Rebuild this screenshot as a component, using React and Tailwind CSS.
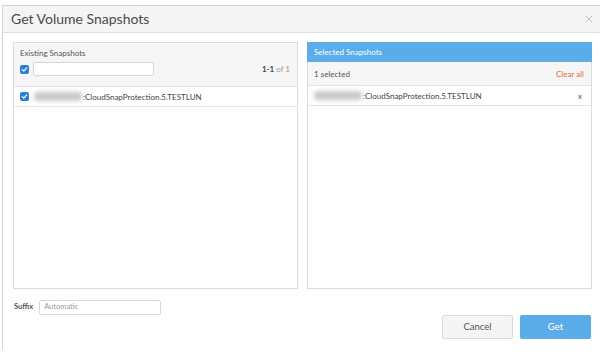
import React from "react";

const Check = () => (
  <span className="w-[9px] h-[9px] rounded-[2px] bg-[#2f7fd6] flex items-center justify-center shrink-0">
    <svg viewBox="0 0 10 10" className="w-[7px] h-[7px]">
      <path d="M1.8 5.2 L4 7.3 L8.2 2.6" stroke="#fff" strokeWidth="1.7" fill="none" strokeLinecap="round" strokeLinejoin="round" />
    </svg>
  </span>
);

const Blur = () => (
  <span className="inline-block w-[48px] h-[9px] bg-[#c9c9c9] blur-[2px] rounded-sm mr-[1px]"></span>
);

const App = () => {
  return (
    <div
      className="w-[600px] h-[354px] bg-white overflow-hidden pt-[5px] pl-[2px]"
      style={{ fontFamily: "Lato, 'Open Sans', sans-serif" }}
    >
      <div className="w-[620px] h-[345px] border-l border-t border-[#d4d4d4] bg-white flex flex-col">
        {/* header */}
        <div className="h-[27px] bg-[#f5f5f5] border-b border-[#dedede] flex items-center justify-between pl-[8px] pr-[29px]">
          <span className="text-[14px] text-[#4a4a4a] leading-none">Get Volume Snapshots</span>
          <svg viewBox="0 0 10 10" className="w-[8px] h-[8px]">
            <path d="M1 1 L9 9 M9 1 L1 9" stroke="#b5b5b5" strokeWidth="1" />
          </svg>
        </div>

        {/* body */}
        <div className="pl-[10px] pt-[9px] flex gap-[9px]">
          {/* existing */}
          <div className="w-[285px] h-[247px] border border-[#dcdcdc] flex flex-col">
            <div className="bg-[#f6f6f6] h-[43px] flex flex-col">
              <div className="h-[19px] flex items-center pl-[6px] text-[8px] text-[#555]">Existing Snapshots</div>
              <div className="flex items-center pl-[6px] pr-[7px] gap-[4px]">
                <Check />
                <div className="w-[121px] h-[14px] bg-white border border-[#d6d6d6] rounded-[2px]"></div>
                <span className="ml-auto text-[8px] text-[#999]">
                  <span className="text-[#444] font-bold">1-1</span> of 1
                </span>
              </div>
            </div>
            <div className="h-[21px] border-t border-b border-[#e4e4e4] flex items-center pl-[6px] gap-[4px] text-[8px] text-[#444]">
              <Check />
              <span className="flex items-center ml-[1px]">
                <Blur />
                :CloudSnapProtection.5.TESTLUN
              </span>
            </div>
          </div>

          {/* selected */}
          <div className="w-[285px] h-[247px] border border-[#dcdcdc] flex flex-col">
            <div className="h-[20px] bg-[#5aade8] flex items-center pl-[7px] text-[8px] text-white -mt-px -mx-px">
              Selected Snapshots
            </div>
            <div className="h-[23px] bg-[#f6f6f6] flex items-center justify-between pl-[6px] pr-[7px] text-[8px]">
              <span className="text-[#555]">1 selected</span>
              <span className="text-[#e4663c]">Clear all</span>
            </div>
            <div className="h-[21px] border-t border-b border-[#e4e4e4] flex items-center justify-between pl-[6px] pr-[9px] text-[8px] text-[#444]">
              <span className="flex items-center">
                <Blur />
                :CloudSnapProtection.5.TESTLUN
              </span>
              <span className="text-[8px] text-[#555]">x</span>
            </div>
          </div>
        </div>

        {/* footer */}
        <div className="flex justify-between w-[588px] pl-[11px]">
          <div className="flex items-center gap-[6px] mt-[11px] h-[14px]">
            <span className="text-[7.5px] font-bold text-[#555]">Suffix</span>
            <div className="w-[122px] h-[15px] border border-[#d6d6d6] rounded-[2px] flex items-center pl-[4px] text-[7.5px] text-[#999]">
              Automatic
            </div>
          </div>
          <div className="flex gap-[7px] mt-[26px]">
            <button className="w-[71px] h-[24px] bg-[#f5f5f5] border border-[#d9d9d9] rounded-[2px] text-[9.5px] text-[#555]">
              Cancel
            </button>
            <button className="w-[71px] h-[24px] bg-[#5aade8] rounded-[2px] text-[9.5px] text-white">
              Get
            </button>
          </div>
        </div>
      </div>
    </div>
  );
};

export default App;
